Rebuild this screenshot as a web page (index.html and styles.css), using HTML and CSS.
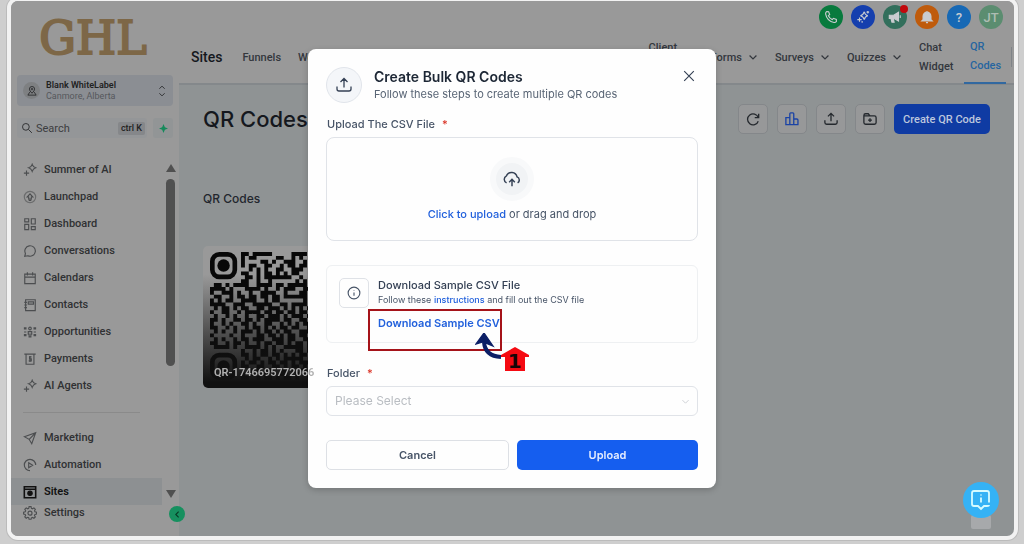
FILE: index.html
```html
<!DOCTYPE html>
<html lang="en">
<head>
<meta charset="utf-8">
<meta name="viewport" content="width=device-width, initial-scale=1">
<title>QR Codes</title>
<link rel="stylesheet" href="styles.css">
</head>
<body>
<svg class="sprite" aria-hidden="true">
  <symbol id="sparkle" viewBox="0 0 16 16"><path d="M10.500 1.500Q11.500 4.500 14.500 5.500Q11.500 6.500 10.500 9.500Q9.500 6.500 6.500 5.500Q9.500 4.500 10.500 1.500zM4 8.500v6M1 11.500h6"/></symbol>
  <symbol id="launch" viewBox="0 0 16 16"><circle cx="8" cy="8" r="6.500" opacity=".6"/><path d="M8 4.500L4.800 8h1.700v2.500h3V8h1.700zM6.500 12h3"/></symbol>
  <symbol id="dashboard" viewBox="0 0 16 16"><path d="M2 2h4.500v3.500H2zM9.500 2H14v6H9.500zM2 8.500h4.500v6H2zM9.500 11H14v3.500H9.500z"/></symbol>
  <symbol id="bubble" viewBox="0 0 16 16"><path d="M2 14l.8-3.200A6 6 0 1 1 5.500 13.400z"/></symbol>
  <symbol id="calendar" viewBox="0 0 16 16"><path d="M2 3.500h12v11H2zM2 7h12M5 1.500v3.500M11 1.500v3.500"/></symbol>
  <symbol id="contacts" viewBox="0 0 16 16"><path d="M3 2h11v12.500H3zM1.500 5h3M1.500 8h3M1.500 11h3M6 4.500h6v2.500H6z"/></symbol>
  <symbol id="people" viewBox="0 0 16 16"><path d="M8 2.500v0a1.500 1.500 0 1 1 0 3 1.500 1.500 0 1 1 0-3M6 7.500h4v3H9v3H7v-3H6z"/><path stroke-width="2.500" d="M1 3.800h3M12 3.800h3M1 11.500h3M12 11.500h3M2.500 7.500v1M13.500 7.500v1"/></symbol>
  <symbol id="bill" viewBox="0 0 16 16"><path d="M1.500 2.500h13M3.500 2.500v11.500h9V2.500M9.800 5.500H7.500v2.300h2v2.400H6.500M8 4.500v7"/></symbol>
  <symbol id="send" viewBox="0 0 16 16"><path d="M1.500 6.500L14.500 2 10 14.500 7 9.500zM7 9.500l7.500-7.500"/></symbol>
  <symbol id="auto" viewBox="0 0 16 16"><path d="M8 14.500A6.500 6.500 0 1 1 14.500 8M6.500 5.500L11 8.300l-4.500 2.700z"/></symbol>
  <symbol id="site" viewBox="0 0 16 16"><path stroke-width="1.800" d="M1.500 2h13v12.500h-13zM1.500 4.800h13"/><circle cx="8" cy="9.500" r="2.500" fill="currentColor"/></symbol>
  <symbol id="gear" viewBox="0 0 16 16"><path d="M6.800 1.200h2.400l.4 1.900 1.300.6 1.700-1.100 1.700 1.800-1 1.600.5 1.300 1.900.4v2.300l-1.900.4-.6 1.300 1.100 1.700-1.700 1.600-1.700-1-1.300.5-.4 1.700H6.800l-.4-1.800-1.300-.5-1.700 1.100-1.700-1.700 1.100-1.700-.6-1.200-1.900-.4V7.700l1.900-.4.6-1.300-1.100-1.700 1.700-1.700 1.700 1.100 1.300-.6z" transform="translate(.4 -.4) scale(.96)"/><circle cx="8" cy="8.200" r="2.300"/></symbol>
  <symbol id="search" viewBox="0 0 16 16"><circle cx="6.500" cy="6.500" r="4.500"/><path d="M10 10l4.500 4.500"/></symbol>
  <symbol id="pin" viewBox="0 0 16 16"><path d="M8 11Q4.500 7.500 4.500 5.500a3.500 3.500 0 0 1 7 0Q11.500 7.500 8 11zM5 9.500l-2.500 4h11l-2.500-4"/><circle cx="8" cy="5.500" r="1"/></symbol>
  <symbol id="updown" viewBox="0 0 16 16"><path d="M4.500 5L8 1.500 11.500 5M4.500 11L8 14.500 11.500 11"/></symbol>
  <symbol id="down" viewBox="0 0 16 16"><path d="M2.500 5.500L8 11l5.500-5.500"/></symbol>
  <symbol id="left" viewBox="0 0 16 16"><path d="M10 3L5 8l5 5"/></symbol>
  <symbol id="close" viewBox="0 0 16 16"><path d="M2.500 2.500l11 11M13.500 2.500l-11 11"/></symbol>
  <symbol id="upload" viewBox="0 0 16 16"><path d="M8 10.500V1.500M4.500 5L8 1.500 11.500 5M1 9.500V12q0 2 2 2h10q2 0 2-2V9.500"/></symbol>
  <symbol id="cloud" viewBox="0 0 16 16"><path d="M3.200 11.500A3.500 3.500 0 0 1 3 5.200a5 5 0 0 1 9.500.9 3 3 0 0 1 .5 5.400M8 14.500V8.500M5.500 10.800L8 8.300l2.500 2.500"/></symbol>
  <symbol id="refresh" viewBox="0 0 16 16"><path d="M14.500 2v4.500H10M14 6.300A6.300 6.300 0 1 0 14 10.500"/></symbol>
  <symbol id="bars" viewBox="0 0 16 16"><path d="M1 6.500h4.500V14.500H1zM5.500 2q0-1 1-1h2.500q1 0 1 1v12.500H5.500zM10 8h3.500q1.300 0 1.300 1v5.500H10z"/></symbol>
  <symbol id="folder" viewBox="0 0 16 16"><path d="M1 4q0-2 2-2h3l2 2.500h5q2 0 2 2V12q0 2-2 2H3q-2 0-2-2zM1 4.500h7M8 7v4.500M5.800 9.200h4.400"/></symbol>
  <symbol id="info" viewBox="0 0 16 16"><circle cx="8" cy="8" r="6.700"/><path d="M8 7.300v3.700M8 4.800v.6"/></symbol>
  <symbol id="phone" viewBox="0 0 16 16"><path d="M3.200 1.800L5.300 2l1.200 3.200L5 6.500Q6.300 9.500 9.500 11l1.300-1.500 3.300 1.300.1 2.200q-1 1.500-2.700 1.300Q3.500 13 1.800 4.500 1.700 2.800 3.200 1.800z"/></symbol>
  <symbol id="stars" viewBox="0 0 16 16"><path d="M9.500 2Q10 5.500 13.500 6.500 10 7.300 9.500 11 8.500 7.300 5 6.500 8.500 5.500 9.500 2zM4 8.500v5M1.500 11h5M13.500 1v3M12 2.500h3M7 12.500v2"/></symbol>
  <symbol id="horn" viewBox="0 0 16 16"><path fill="currentColor" d="M1.500 6h5L12 2.500v10L6.500 9.500h-5zM3.500 10h2.500l1 4H4.500z"/><path d="M14 6v3"/></symbol>
  <symbol id="bell" viewBox="0 0 16 16"><path fill="currentColor" d="M3.500 11V7a4.500 4.500 0 0 1 9 0v4l1.500 1.500H2zM8 1v1M6.800 14.500h2.400"/></symbol>
</svg>

<div class="app">
  <aside class="sidebar">
    <div class="logo">GHL</div>
    <button class="account">
      <span class="avatar"><svg class="i12"><use href="#pin"/></svg></span>
      <span class="account-text"><b>Blank WhiteLabel</b><span>Canmore, Alberta</span></span>
      <svg class="i12"><use href="#updown"/></svg>
    </button>
    <div class="search-row">
      <label class="search"><svg class="i12"><use href="#search"/></svg><input type="text" placeholder="Search" aria-label="Search"><kbd>ctrl K</kbd></label>
      <button class="quick" aria-label="Quick actions"><svg viewBox="0 0 10 10"><path d="M5 0l1.500 3.500L10 5 6.500 6.500 5 10 3.500 6.500 0 5l3.500-1.500z"/></svg></button>
    </div>
    <div class="menu-area">
      <nav class="menu">
        <a href="#"><svg><use href="#sparkle"/></svg>Summer of AI</a>
        <a href="#"><svg><use href="#launch"/></svg>Launchpad</a>
        <a href="#"><svg><use href="#dashboard"/></svg>Dashboard</a>
        <a href="#"><svg><use href="#bubble"/></svg>Conversations</a>
        <a href="#"><svg><use href="#calendar"/></svg>Calendars</a>
        <a href="#"><svg><use href="#contacts"/></svg>Contacts</a>
        <a href="#"><svg><use href="#people"/></svg>Opportunities</a>
        <a href="#"><svg><use href="#bill"/></svg>Payments</a>
        <a href="#"><svg><use href="#sparkle"/></svg>AI Agents</a>
        <hr>
        <a href="#"><svg><use href="#send"/></svg>Marketing</a>
        <a href="#"><svg><use href="#auto"/></svg>Automation</a>
        <a href="#" class="current"><svg><use href="#site"/></svg>Sites</a>
      </nav>
      <div class="scrollbar"><i class="tri up"></i><i class="thumb"></i><i class="tri dn"></i></div>
    </div>
    <a href="#" class="settings"><svg><use href="#gear"/></svg>Settings</a>
    <button class="collapse" aria-label="Collapse"><svg><use href="#left"/></svg></button>
  </aside>

  <main class="main">
    <header class="header">
      <div class="actions">
        <button class="dot green" aria-label="Call"><svg><use href="#phone"/></svg></button>
        <button class="dot blue" aria-label="Assistant"><svg><use href="#stars"/></svg></button>
        <button class="dot teal" aria-label="News"><svg><use href="#horn"/></svg><i class="badge"></i></button>
        <button class="dot orange" aria-label="Notifications"><svg><use href="#bell"/></svg></button>
        <button class="dot sky">?</button>
        <button class="dot user">JT</button>
      </div>
      <nav class="tabs">
        <h1>Sites</h1>
        <a href="#">Funnels</a>
        <a href="#">Websites</a>
        <a href="#" class="client">Client Portal</a>
        <a href="#">Forms <svg><use href="#down"/></svg></a>
        <a href="#">Surveys <svg><use href="#down"/></svg></a>
        <a href="#">Quizzes <svg><use href="#down"/></svg></a>
        <a href="#" class="narrow">Chat Widget</a>
        <a href="#" class="narrow active">QR Codes</a>
        <span class="edge"></span>
      </nav>
    </header>
    <section class="content">
      <div class="toolbar">
        <h2>QR Codes</h2>
        <button class="tool" aria-label="Refresh"><svg><use href="#refresh"/></svg></button>
        <button class="tool accent" aria-label="Statistics"><svg><use href="#bars"/></svg></button>
        <button class="tool" aria-label="Bulk upload"><svg><use href="#upload"/></svg></button>
        <button class="tool" aria-label="New folder"><svg><use href="#folder"/></svg></button>
        <button class="create">Create QR Code</button>
      </div>
      <h3>QR Codes</h3>
      <article class="qr-card">
        <svg id="qr" viewBox="0 0 33 33"></svg>
        <span>QR-1746695772066</span>
      </article>
    </section>
  </main>
</div>

<div class="overlay">
  <div class="modal" role="dialog" aria-labelledby="dialog-title">
    <div class="modal-head">
      <span class="head-icon"><svg><use href="#upload"/></svg></span>
      <div class="head-text"><h2 id="dialog-title">Create Bulk QR Codes</h2><p>Follow these steps to create multiple QR codes</p></div>
      <button class="close" aria-label="Close"><svg><use href="#close"/></svg></button>
    </div>
    <div class="label">Upload The CSV File <em>*</em></div>
    <div class="drop">
      <span class="cloud"><svg><use href="#cloud"/></svg></span>
      <p><a href="#">Click to upload</a> or drag and drop</p>
    </div>
    <div class="sample">
      <span class="info"><svg><use href="#info"/></svg></span>
      <div class="sample-text">
        <h3>Download Sample CSV File</h3>
        <p>Follow these <a href="#">instructions</a> and fill out the CSV file</p>
        <div class="download"><a href="#">Download Sample CSV</a><i class="frame"></i>
          <svg class="pointer" viewBox="0 0 56 42"><path d="M9 9Q10 23 26 24" fill="none" stroke="#0c1f66" stroke-width="4"/><path d="M9 0L1 11l7-2 10 4z" fill="#0c1f66" stroke="#0c1f66"/><path d="M40 14L26 22v2h4v14h20V24h4v-2z" fill="#f50a12"/><text x="40" y="35" text-anchor="middle">1</text></svg>
        </div>
      </div>
    </div>
    <label class="label folder-label" for="folder">Folder <em>*</em></label>
    <div class="select"><select id="folder"><option>Please Select</option></select><svg><use href="#down"/></svg></div>
    <div class="buttons"><button class="cancel">Cancel</button><button class="submit">Upload</button></div>
  </div>
</div>

<div class="help">
  <button aria-label="Help"><svg viewBox="0 0 22 22"><path d="M19 13.500V4q0-2-2-2H4Q2 2 2 4v11q0 2 2 2h4l3 3 3-3h3q2 0 2-1"/><path d="M11 8.500v5M11 5.500v1"/></svg></button>
  <i></i>
</div>
<script src="qr.js"></script>
</body>
</html>
```
FILE: styles.css
```css
* { box-sizing: border-box; }
body { margin: 0; height: 100vh; background: #cecece; font-family: Inter, "Liberation Sans", sans-serif; overflow: hidden; padding: 1px 10px 8px 11px; }
h1, h2, h3, p { margin: 0; font-weight: 500; }
button { font: inherit; padding: 0; border: 0; background: none; color: inherit; display: flex; align-items: center; justify-content: center; }
a { color: inherit; text-decoration: none; }
svg { fill: none; stroke: currentColor; stroke-width: 1.3; width: 14px; height: 14px; flex: none; }
.i12 { width: 12px; height: 12px; }
.sprite { position: absolute; width: 0; height: 0; }

.app { display: flex; height: 100%; border-radius: 7px; background: #8f9394; box-shadow: 0 0 0 4px #f2f2f2, 0 0 0 5px #bbb; }
.sidebar { position: relative; width: 168px; flex: none; display: flex; flex-direction: column; background: #999; border-radius: 7px 0 0 7px; font-family: Roboto, sans-serif; color: #303133; }
.logo { height: 74px; padding-right: 4px; display: flex; align-items: center; justify-content: center; font: 46px/1 "DejaVu Serif", serif; color: #7d6747; -webkit-text-stroke: 2px #7d6747; }
.account { margin: 0 6px; height: 31px; padding: 0 5px 0 6px; gap: 6px; background: #8b8e93; border-radius: 4px; text-align: left; line-height: 11px; font-size: 9px; }
.account-text { flex: 1; display: flex; flex-direction: column; }
.account-text b { font-weight: 600; color: #222; }
.account-text span { color: #56585c; }
.avatar { width: 17px; height: 17px; border-radius: 50%; background: #7e8082; display: flex; align-items: center; justify-content: center; }
.search-row { display: flex; gap: 6px; margin: 12px 6px 0; height: 20px; }
.search { flex: 1; min-width: 0; display: flex; align-items: center; gap: 3px; padding: 0 2px 0 4px; background: #949698; border-radius: 3px; }
.search input { flex: 1; min-width: 0; border: 0; background: none; padding: 0; font: 11px Roboto, sans-serif; }
.search input::placeholder { color: #3c3d40; opacity: 1; }
kbd { font: 500 9px/13px Roboto, sans-serif; background: #85878a; padding: 0 3px; border-radius: 2px; color: #222; }
.quick { width: 20px; background: #929596; border-radius: 3px; }
.quick svg { width: 9px; height: 9px; fill: #168a5b; stroke: none; }
.menu-area { display: flex; margin-top: 18px; }
.menu { flex: 1; }
.menu a, .settings { display: flex; align-items: center; gap: 7px; height: 27px; padding-left: 12px; font-size: 11px; font-weight: 500; }
.menu hr { margin: 13px 22px 11px 12px; border: 0; border-top: 1px solid #8a8a8a; }
.menu a.current { background: #8d9092; color: #111; font-weight: 600; }
.menu svg, .settings svg { color: #4c4e50; }
.menu .current svg { color: #111; }
.scrollbar { width: 17px; padding: 8px 0 7px; display: flex; flex-direction: column; align-items: center; }
.thumb { width: 9px; height: 187px; background: #505050; border-radius: 5px; margin: 7px 0 auto; }
.tri { border: 5px solid transparent; border-top: 0; border-bottom: 8px solid #505050; }
.tri.dn { border-bottom: 0; border-top: 8px solid #505050; }
.settings { height: 15px; }
.collapse { position: absolute; right: -6px; bottom: 14px; width: 16px; height: 16px; border-radius: 50%; background: #16905f; color: #073b26; }
.collapse svg { width: 9px; height: 9px; stroke-width: 2; }

.main { flex: 1; min-width: 0; display: flex; flex-direction: column; }
.header { background: #999; border-bottom: 2px solid #84888b; border-radius: 0 7px 0 0; height: 84px; padding-top: 4px; }
.actions { display: flex; justify-content: flex-end; gap: 7px; padding-right: 11px; height: 25px; }
.dot { position: relative; width: 24px; height: 24px; border-radius: 50%; color: #c9ccd0; font: 500 13px Roboto, sans-serif; }
.actions { gap: 8px; }
.green { background: #087a3d; } .blue { background: #153fae; } .teal { background: #326f5c; } .orange { background: #bf5b0c; } .sky { background: #1769b5; } .user { background: #5b8d70; color: #aebdb3; }
.badge { position: absolute; right: -1px; top: 0; width: 8px; height: 8px; border-radius: 50%; background: #c2080c; }
.tabs { display: flex; align-items: center; height: 54px; padding-left: 12px; font-size: 11px; line-height: 19px; color: #33373d; font-family: Roboto, sans-serif; font-weight: 500; }
.tabs h1 { font-size: 14px; color: #15181d; margin-right: 20px; }
.tabs a { margin-right: 17px; display: flex; align-items: center; gap: 6px; }
.tabs svg { width: 10px; height: 10px; stroke-width: 2; }
.tabs .client { width: 44px; margin: 0 18px 0 auto; }
.tabs .narrow { width: 34px; }
.tabs .active { width: 42px; height: 54px; padding: 0 6px; margin: 0 5px 0 -6px; color: #2665a0; border-bottom: 2px solid #3168a0; }
.edge { width: 3px; height: 20px; border-left: 1px solid #808488; }

.content { padding: 19px 24px; color: #22262d; }
.toolbar { display: flex; gap: 9px; align-items: center; }
.toolbar h2 { flex: 1; font-size: 22px; line-height: 30px; color: #15181e; }
.tool { width: 30px; height: 30px; border: 1px solid #84878a; border-radius: 5px; background: #979899; color: #25292e; }
.tool svg { stroke-width: 1.5; }
.tool.accent { color: #1b43a5; }
.create { width: 96px; height: 30px; border-radius: 5px; background: #0f3ba3; color: #bdc7dd; font: 500 11px Roboto, sans-serif; }
.content h3 { font-size: 12px; line-height: 16px; margin: 57px 0 39px; }
.qr-card { position: relative; width: 142px; height: 142px; padding: 6px 7px; border-radius: 5px; background: #999; overflow: hidden; }
.qr-card svg { width: 128px; height: 128px; display: block; stroke: none; fill: #080808; }
.qr-card::after { content: ""; position: absolute; inset: 0; background: linear-gradient(transparent 20%, #111 96%); }
.qr-card span { position: absolute; z-index: 1; left: 11px; bottom: 8px; font: 600 11px/14px Roboto, sans-serif; color: #b0b0b0; }

.overlay { position: fixed; inset: 0; display: flex; align-items: center; justify-content: center; padding-bottom: 8px; }
.modal { width: 408px; padding: 18px; border-radius: 8px; background: #fefefe; color: #475467; font-size: 11px; line-height: 16px; box-shadow: 0 2px 6px #0003; }
.modal a { color: #2160dc; font-weight: 500; }
.modal-head { display: flex; gap: 12px; height: 36px; }
.head-icon { width: 36px; height: 36px; border-radius: 50%; border: 1px solid #e1e5eb; background: #f4f6f9; display: flex; align-items: center; justify-content: center; color: #344054; }
.head-icon svg { width: 16px; height: 16px; }
.head-text { flex: 1; }
.head-text h2 { font-size: 14px; line-height: 20px; font-weight: 600; color: #1d2735; }
.head-text p { font-size: 11px; line-height: 15px; font-weight: 400; color: #596575; }
.close { width: 18px; height: 18px; color: #344054; }
.label { display: block; margin: 13px 1px 5px; font-weight: 500; }
.label em { color: #d92d20; font-style: normal; margin-left: 4px; }
.drop { height: 104px; border: 1px solid #e0e3e8; border-radius: 8px; display: flex; flex-direction: column; align-items: center; padding-top: 19px; gap: 5px; }
.cloud { width: 44px; height: 44px; border-radius: 50%; background: #f1f3f5; border: 6px solid #f8f9fa; display: flex; align-items: center; justify-content: center; color: #344054; }
.cloud svg { width: 18px; height: 18px; }
.drop p { font-weight: 400; }
.sample { height: 78px; margin-top: 24px; padding: 12px; border: 1px solid #eef0f2; border-radius: 6px; display: flex; gap: 9px; }
.info { width: 30px; height: 30px; border: 1px solid #dfe2e7; border-radius: 5px; display: flex; align-items: center; justify-content: center; }
.sample-text h3 { font-size: 11px; line-height: 15px; color: #344054; }
.sample-text p { font-size: 9px; line-height: 14px; font-weight: 400; }
.download { position: relative; margin-top: 8px; }
.download a { font-weight: 600; }
.frame { position: absolute; left: -10px; top: -6px; width: 134px; height: 42px; border: 2px solid #a51319; }
.pointer { position: absolute; left: 97px; top: 18px; width: 56px; height: 42px; stroke: none; }
.pointer text { font: bold 20px "DejaVu Sans", sans-serif; fill: #160507; }
.folder-label { margin-top: 22px; }
.select { position: relative; }
.select select { width: 100%; height: 30px; appearance: none; border: 1px solid #e0e3e8; border-radius: 6px; background: none; padding: 0 8px; font: 12px Inter, sans-serif; color: #b9bdc2; }
.select svg { position: absolute; right: 8px; top: 11px; width: 9px; height: 9px; color: #bfc3c8; }
.buttons { display: flex; gap: 8px; margin-top: 24px; }
.buttons button { flex: 1; height: 30px; border-radius: 5px; font-weight: 600; }
.cancel { border: 1px solid #dde0e5; }
.buttons .submit { background: #155eef; color: #e6eeff; }

.help { position: fixed; right: 25px; bottom: 15px; display: flex; flex-direction: column; align-items: center; }
.help button { width: 36px; height: 36px; border-radius: 50%; background: #35b2f5; color: #d6fbff; z-index: 1; }
.help button svg { width: 22px; height: 22px; stroke-width: 1.8; }
.help i { width: 20px; height: 14px; margin-top: -3px; background: #a7a9ab; border-radius: 2px; }
```
FILE: qr.js
```javascript
const rows = [
  '       .##.#####.....#####..#.###',
  '       .#.##.....##..#.#.##..##.#',
  '       .#....##.#..###..#.#.##..#',
  '       .#.##..##..#.##.##...#.#.#',
  '       ...#.#.#..##..###.#.##.#.#',
  '       .##..#.##.#.#.##..##...#.#',
  '       ..##.#.#######..#.#.##.#.#',
  '........##..#..#......#.#.#......',
  '.##.#.####..####.##.#####.##.#.##',
  '####.#...####.#..#.###..##.#.##.#',
  '#..###.#..#..####..#...##.#.##..#',
  '.##..#.##.##.##.##.######.##.#.##',
  '#.#.##..####..#.##......#.#.##..#',
  '####..###..#####..##.####.##.#.##',
  '.#.##.#.##..##.###.#.#.#.#.#..#.#',
  '#..##..#.####.##.##.##.##.#.##..#',
  '.#..#.#..#..##.###.#.###.##.#.#.#',
  '##.#..##.##.#.####.##..##.#..##.#',
  '#..#.#..##.#..##..#.#.#.##.#.##.#',
  '##..#.#..#.##.#.#.##.##..##.##..#',
  '.#.#..#.###.#.##.#.##..###.#.##.#',
  '#....#..#...##.##.#.##.##.#.##..#',
  '.#.#..#.##.###..###.##..##.##.#.#',
  '##..#.##.#..#.##.##.#.##.#.#.##.#',
  '.####.#..####.#.#..#####.#.##.#.#',
  '........#..#.##.#.#...##.##.#.#.#',
  '       .##.#.##.##.#.#.##.#.##..#',
  '       ..#.##..#.#.#####..#.#.#.#',
  '       .#.##.#.##.##.#.###..##..#',
  '       .##..##..##.#.##.#.##.#.##',
  '       ...#.#.##..##.#.##.#.##..#',
  '       .#.##.##.#.##..#.##.#.##.#',
  '       .##..#.##.#.##.#..#.#.##.#'
];
let path = '';
rows.forEach((row, y) => [...row].forEach((cell, x) => {
  if (cell === '#' && !(x > 24 && y < 8)) path += `M${x} ${y}h1v1h-1z`;
}));
const finder = (x, y) =>
  `<rect x="${x + 0.6}" y="${y + 0.6}" width="5.8" height="5.8" rx="1.8" fill="none" stroke="#080808" stroke-width="1.2"/><circle cx="${x + 3.5}" cy="${y + 3.5}" r="1.6"/>`;
document.getElementById('qr').innerHTML =
  `<path d="${path}"/>` + finder(0, 0) + finder(0, 26) + finder(26, 0);
```
